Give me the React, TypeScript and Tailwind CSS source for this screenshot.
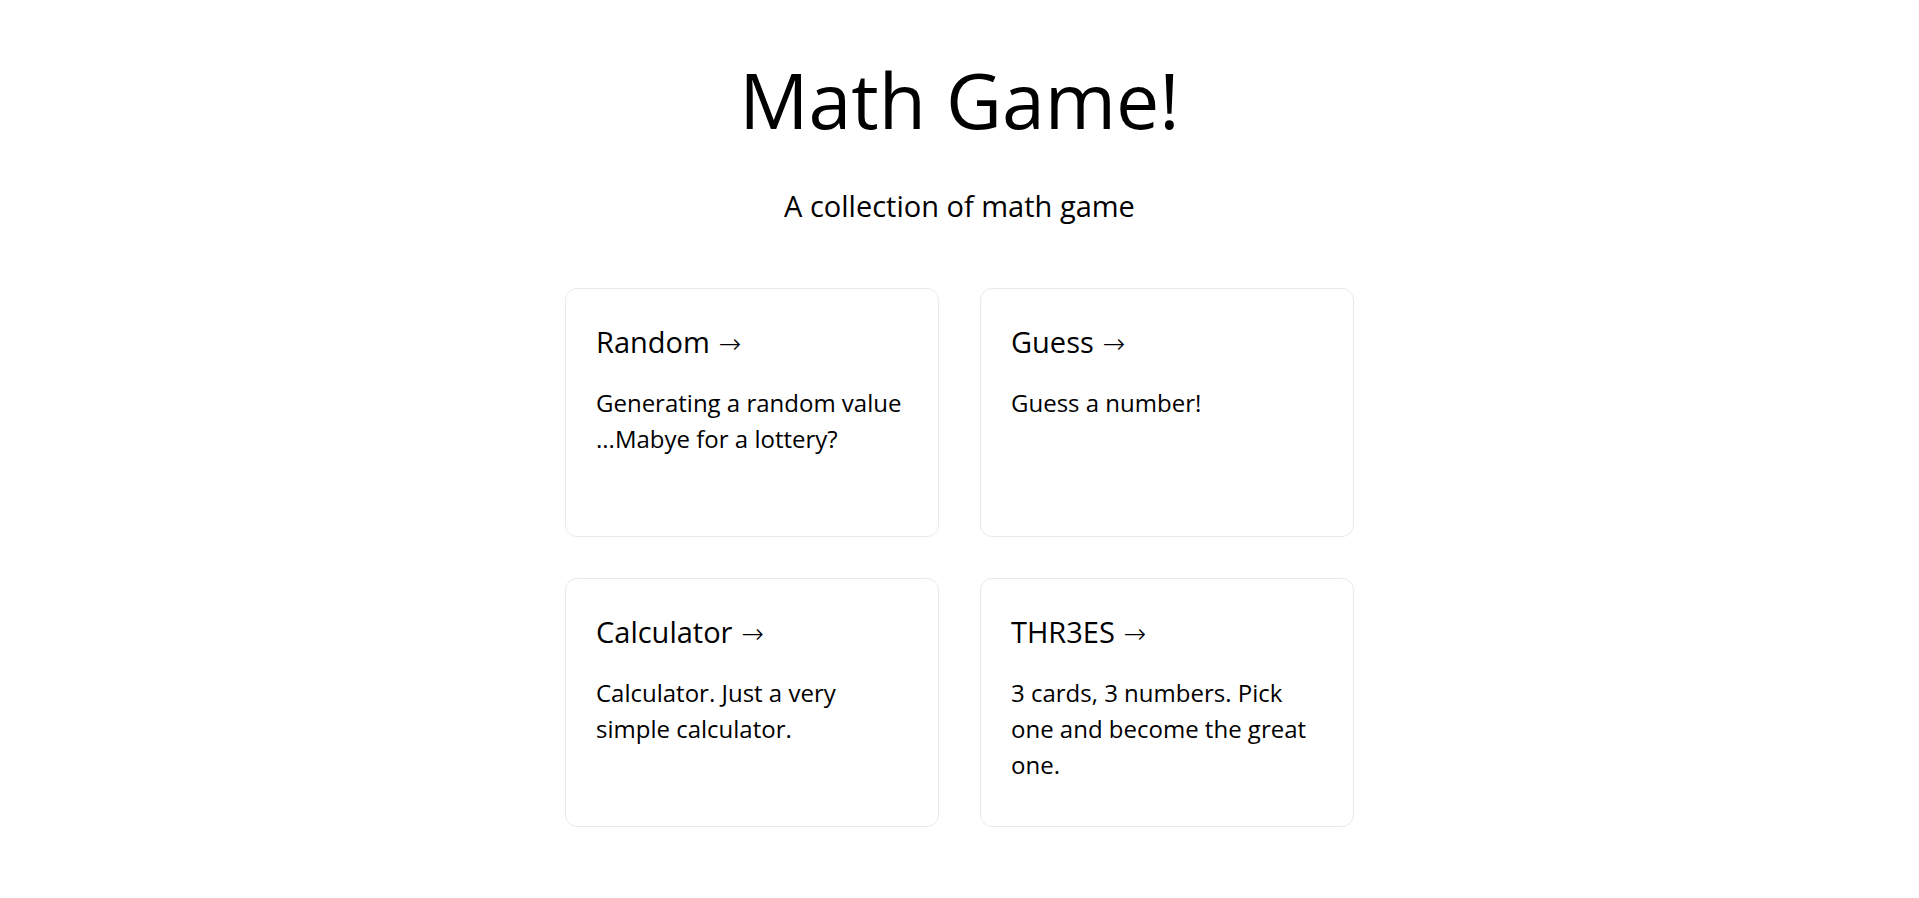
import React from "react";

const cards = [
  { title: "Random", lines: ["Generating a random value", "...Mabye for a lottery?"] },
  { title: "Guess", lines: ["Guess a number!"] },
  { title: "Calculator", lines: ["Calculator. Just a very", "simple calculator."] },
  { title: "THR3ES", lines: ["3 cards, 3 numbers. Pick", "one and become the great", "one."] },
];

export default function App() {
  return (
    <div className="min-h-screen bg-white flex flex-col items-center text-black font-['Open_Sans',sans-serif]">
      <h1 className="pt-[61px] text-[77px] leading-none font-normal">Math Game!</h1>
      <p className="mt-[53px] text-[29px] leading-none">A collection of math game</p>
      <div className="mt-[68px] grid grid-cols-[374px_374px] gap-[41px]">
        {cards.map((c) => (
          <a
            key={c.title}
            href="#"
            className="block h-[249px] rounded-[12px] border border-[#eaeaea] px-[30px] pt-[38px]"
          >
            <h2 className="text-[29px] leading-none whitespace-nowrap">
              {c.title}
              <span className="ml-[9px] font-['DejaVu_Sans',sans-serif] font-extralight text-[27px]">→</span>
            </h2>
            <p className="mt-[28px] text-[24px] leading-[36px]">
              {c.lines.map((l, i) => (
                <span key={i} className="block whitespace-nowrap">
                  {l}
                </span>
              ))}
            </p>
          </a>
        ))}
      </div>
    </div>
  );
}
